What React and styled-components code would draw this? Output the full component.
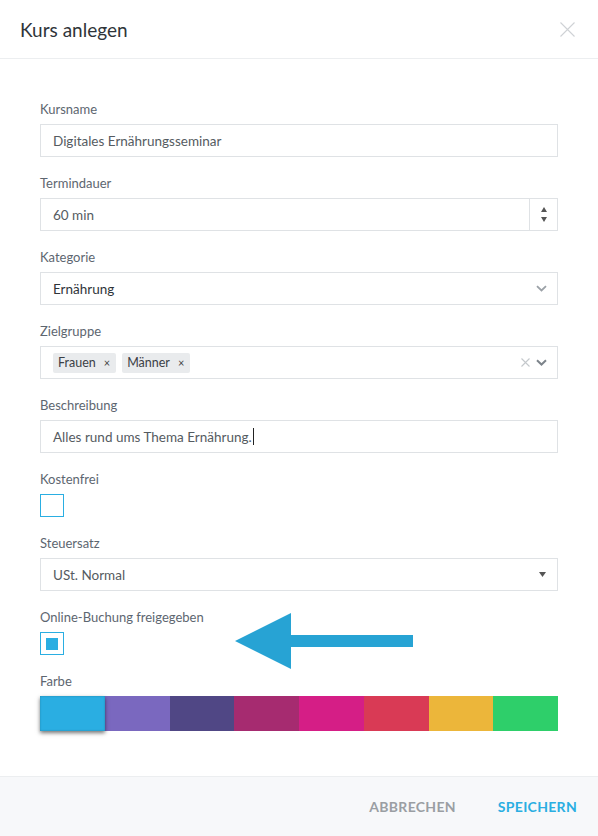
import React from "react";
import styled, { createGlobalStyle } from "styled-components";

const Global = createGlobalStyle`
  html, body { margin: 0; padding: 0; background: #fff; }
  body { font-family: "Source Sans Pro", Lato, "Noto Sans", sans-serif; -webkit-font-smoothing: antialiased; }
  * { box-sizing: border-box; }
`;

const Modal = styled.div`
  position: relative;
  width: 598px;
  height: 836px;
  display: flex;
  flex-direction: column;
  background: #fff;
`;

const Header = styled.div`
  height: 59px;
  flex: none;
  display: flex;
  align-items: center;
  justify-content: space-between;
  padding: 0 20px 0 20px;
  border-bottom: 1px solid #eceef0;
`;

const Title = styled.h1`
  margin: 0;
  font-size: 19px;
  font-weight: 400;
  color: #2f3439;
  padding-top: 1px;
`;

const Close = styled.button`
  border: 0;
  background: none;
  padding: 0;
  width: 18px;
  height: 18px;
  display: flex;
  align-items: center;
  justify-content: center;
  margin-right: 2px;
`;

const Body = styled.div`
  flex: 1;
  display: flex;
  flex-direction: column;
  gap: 17px;
  padding: 41px 40px 0 40px;
`;

const Field = styled.div`
  display: flex;
  flex-direction: column;
  gap: 6px;
`;

const Label = styled.label`
  font-size: 13px;
  line-height: 18px;
  color: #5d6670;
`;

const Box = styled.div`
  height: 33px;
  display: flex;
  align-items: center;
  border: 1px solid #dfe2e5;
  background: #fff;
  padding-left: 12px;
  font-size: 13.5px;
  color: ${(p) => p.$color || "#555b61"};
`;

const Grow = styled.span`
  flex: 1;
  display: flex;
  align-items: center;
  gap: 6px;
`;

const Stepper = styled.div`
  width: 28px;
  align-self: stretch;
  border-left: 1px solid #dfe2e5;
  display: flex;
  flex-direction: column;
  align-items: center;
  justify-content: center;
  gap: 5px;
`;

const IconSlot = styled.span`
  display: flex;
  align-items: center;
  gap: 6px;
  padding-right: ${(p) => p.$pr || 10}px;
`;

const Tag = styled.span`
  display: inline-flex;
  align-items: center;
  gap: 8px;
  height: 20px;
  padding: 0 6px 0 5px;
  background: #e9ebed;
  border-radius: 2px;
  font-size: 12.5px;
  color: #3b4046;
`;

const TagX = styled.span`
  font-size: 11px;
  color: #444;
`;

const Caret = styled.span`
  display: inline-block;
  width: 1px;
  height: 17px;
  background: #222;
  margin-left: 1px;
`;

const Check = styled.div`
  width: 24px;
  height: 23px;
  border: 1px solid #2aaee2;
  display: flex;
  align-items: center;
  justify-content: center;
  background: #fff;
`;

const CheckFill = styled.div`
  width: 12px;
  height: 12px;
  background: #2aaee2;
`;

const Palette = styled.div`
  display: flex;
  height: 35px;
`;

const Swatch = styled.div`
  flex: 1;
  background: ${(p) => p.$c};
  ${(p) =>
    p.$sel &&
    `position: relative; z-index: 1; box-shadow: 0 2px 4px rgba(0,0,0,0.55), inset 0 0 2px rgba(0,0,0,0.25);`}
`;

const Footer = styled.div`
  flex: none;
  height: 60px;
  margin-top: auto;
  background: #f7f8fa;
  border-top: 1px solid #eceef0;
  display: flex;
  align-items: center;
  justify-content: flex-end;
  gap: 42px;
  padding: 0 21px 0 0;
`;

const FooterBtn = styled.button`
  border: 0;
  background: none;
  padding: 0;
  font-family: inherit;
  font-size: 14px;
  font-weight: 700;
  letter-spacing: 0.3px;
  text-transform: uppercase;
  color: ${(p) => (p.$primary ? "#2aaee2" : "#9a9ea3")};
`;

const Arrow = styled.svg`
  position: absolute;
  left: 234px;
  top: 611px;
`;

const Chevron = () => (
  <svg width="11" height="7" viewBox="0 0 11 7">
    <path d="M1 1.2 L5.5 5.5 L10 1.2" fill="none" stroke="#9ba1a7" strokeWidth="1.8" />
  </svg>
);

const colors = ["#2aaee2", "#7a68bf", "#504785", "#a62b70", "#d51e86", "#d93a55", "#ecb63a", "#2ecf6a"];

export default function App() {
  return (
    <Modal>
      <Global />
      <Header>
        <Title>Kurs anlegen</Title>
        <Close aria-label="close">
          <svg width="15" height="15" viewBox="0 0 15 15">
            <path d="M0.5 0.5 L14.5 14.5 M14.5 0.5 L0.5 14.5" stroke="#cfd2d5" strokeWidth="1.1" />
          </svg>
        </Close>
      </Header>
      <Body>
        <Field>
          <Label>Kursname</Label>
          <Box>Digitales Ernährungsseminar</Box>
        </Field>
        <Field>
          <Label>Termindauer</Label>
          <Box>
            <Grow>60 min</Grow>
            <Stepper>
              <svg width="6" height="5" viewBox="0 0 6 5"><path d="M3 0 L6 5 L0 5 Z" fill="#555" /></svg>
              <svg width="6" height="5" viewBox="0 0 6 5"><path d="M0 0 L6 0 L3 5 Z" fill="#555" /></svg>
            </Stepper>
          </Box>
        </Field>
        <Field>
          <Label>Kategorie</Label>
          <Box $color="#2f3439">
            <Grow>Ernährung</Grow>
            <IconSlot $pr={10}><Chevron /></IconSlot>
          </Box>
        </Field>
        <Field>
          <Label>Zielgruppe</Label>
          <Box>
            <Grow>
              <Tag>Frauen <TagX>×</TagX></Tag>
              <Tag>Männer <TagX>×</TagX></Tag>
            </Grow>
            <IconSlot $pr={10}>
              <svg width="9" height="9" viewBox="0 0 9 9">
                <path d="M0.5 0.5 L8.5 8.5 M8.5 0.5 L0.5 8.5" stroke="#c4c8cc" strokeWidth="1.1" />
              </svg>
              <svg width="11" height="7" viewBox="0 0 11 7">
                <path d="M1 1.2 L5.5 5.5 L10 1.2" fill="none" stroke="#7d848b" strokeWidth="2" />
              </svg>
            </IconSlot>
          </Box>
        </Field>
        <Field>
          <Label>Beschreibung</Label>
          <Box>
            Alles rund ums Thema Ernährung.<Caret />
          </Box>
        </Field>
        <Field>
          <Label>Kostenfrei</Label>
          <Check />
        </Field>
        <Field>
          <Label>Steuersatz</Label>
          <Box>
            <Grow>USt. Normal</Grow>
            <IconSlot $pr={11}>
              <svg width="7" height="5" viewBox="0 0 7 5"><path d="M0 0 L7 0 L3.5 5 Z" fill="#555" /></svg>
            </IconSlot>
          </Box>
        </Field>
        <Field>
          <Label>Online-Buchung freigegeben</Label>
          <Check>
            <CheckFill />
          </Check>
        </Field>
        <Field>
          <Label>Farbe</Label>
          <Palette>
            {colors.map((c, i) => (
              <Swatch key={c} $c={c} $sel={i === 0} />
            ))}
          </Palette>
        </Field>
      </Body>
      <Footer>
        <FooterBtn>Abbrechen</FooterBtn>
        <FooterBtn $primary>Speichern</FooterBtn>
      </Footer>
      <Arrow width="182" height="60" viewBox="0 0 182 60">
        <path d="M1 30 L57 2 L57 24 L179 24 L179 36 L57 36 L57 58 Z" fill="#27a3d4" />
      </Arrow>
    </Modal>
  );
}
